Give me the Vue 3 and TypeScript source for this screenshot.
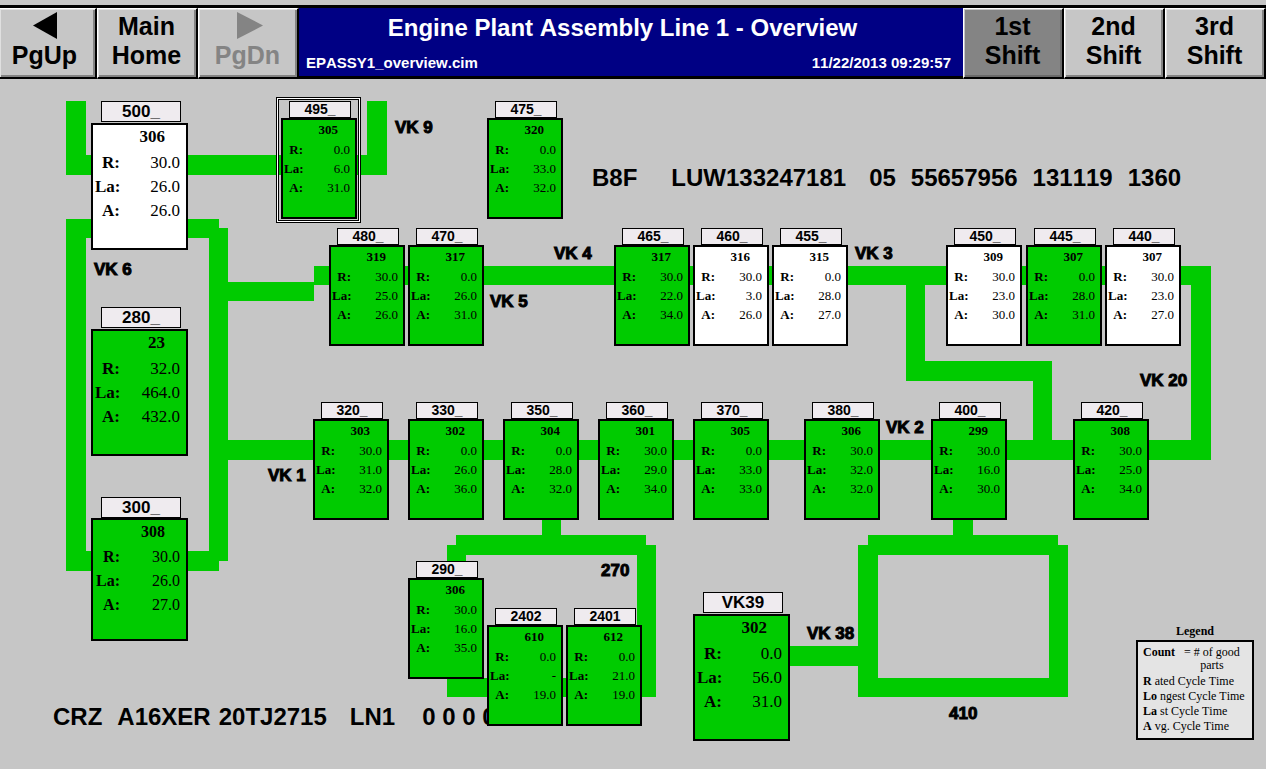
<script setup lang="ts">
import { ref } from 'vue'

type Size = 'small' | 'medium' | 'large'

interface Station {
  name: string
  x: number
  y: number
  count: string
  rated: string
  last: string
  avg: string
  idle?: boolean
  selected?: boolean
  size?: Size
}

interface Label {
  text: string
  x: number
  y: number
}

const shifts = ['1st', '2nd', '3rd']
const activeShift = ref('1st')

// x / y is the top left corner of the station on the floor plan
const stations: Station[] = [
  { name: '500_', x: 91, y: 22, count: '306', rated: '30.0', last: '26.0', avg: '26.0', size: 'large', idle: true },
  { name: '280_', x: 91, y: 228, count: '23', rated: '32.0', last: '464.0', avg: '432.0', size: 'large' },
  { name: '300_', x: 91, y: 418, count: '308', rated: '30.0', last: '26.0', avg: '27.0', size: 'medium' },
  { name: 'VK39', x: 693, y: 513, count: '302', rated: '0.0', last: '56.0', avg: '31.0', size: 'large' },
  { name: '495_', x: 281, y: 22, count: '305', rated: '0.0', last: '6.0', avg: '31.0', selected: true },
  { name: '475_', x: 487, y: 22, count: '320', rated: '0.0', last: '33.0', avg: '32.0' },
  { name: '480_', x: 329, y: 149, count: '319', rated: '30.0', last: '25.0', avg: '26.0' },
  { name: '470_', x: 408, y: 149, count: '317', rated: '0.0', last: '26.0', avg: '31.0' },
  { name: '465_', x: 614, y: 149, count: '317', rated: '30.0', last: '22.0', avg: '34.0' },
  { name: '460_', x: 693, y: 149, count: '316', rated: '30.0', last: '3.0', avg: '26.0', idle: true },
  { name: '455_', x: 772, y: 149, count: '315', rated: '0.0', last: '28.0', avg: '27.0', idle: true },
  { name: '450_', x: 946, y: 149, count: '309', rated: '30.0', last: '23.0', avg: '30.0', idle: true },
  { name: '445_', x: 1026, y: 149, count: '307', rated: '0.0', last: '28.0', avg: '31.0' },
  { name: '440_', x: 1105, y: 149, count: '307', rated: '30.0', last: '23.0', avg: '27.0', idle: true },
  { name: '320_', x: 313, y: 323, count: '303', rated: '30.0', last: '31.0', avg: '32.0' },
  { name: '330_', x: 408, y: 323, count: '302', rated: '0.0', last: '26.0', avg: '36.0' },
  { name: '350_', x: 503, y: 323, count: '304', rated: '0.0', last: '28.0', avg: '32.0' },
  { name: '360_', x: 598, y: 323, count: '301', rated: '30.0', last: '29.0', avg: '34.0' },
  { name: '370_', x: 693, y: 323, count: '305', rated: '0.0', last: '33.0', avg: '33.0' },
  { name: '380_', x: 804, y: 323, count: '306', rated: '30.0', last: '32.0', avg: '32.0' },
  { name: '400_', x: 931, y: 323, count: '299', rated: '30.0', last: '16.0', avg: '30.0' },
  { name: '420_', x: 1073, y: 323, count: '308', rated: '30.0', last: '25.0', avg: '34.0' },
  { name: '290_', x: 408, y: 482, count: '306', rated: '30.0', last: '16.0', avg: '35.0' },
  { name: '2402', x: 487, y: 529, count: '610', rated: '0.0', last: '-', avg: '19.0' },
  { name: '2401', x: 566, y: 529, count: '612', rated: '0.0', last: '21.0', avg: '19.0' },
]

const labels: Label[] = [
  { text: 'VK 9', x: 395, y: 38 },
  { text: 'VK 6', x: 94, y: 180 },
  { text: 'VK 4', x: 554, y: 164 },
  { text: 'VK 5', x: 490, y: 212 },
  { text: 'VK 3', x: 855, y: 164 },
  { text: 'VK 20', x: 1140, y: 291 },
  { text: 'VK 2', x: 886, y: 338 },
  { text: 'VK 1', x: 268, y: 386 },
  { text: '270', x: 601, y: 481 },
  { text: 'VK 38', x: 807, y: 544 },
  { text: '410', x: 949, y: 624 },
]

// conveyor segments: x, y, width, height
const conveyors: [number, number, number, number][] = [
  [66, 22, 20, 74], [66, 76, 320, 20], [367, 22, 20, 74],
  [66, 140, 153, 19], [66, 140, 20, 352], [209, 149, 19, 333], [66, 472, 153, 20],
  [209, 203, 105, 19], [314, 187, 897, 19], [1191, 187, 20, 194], [209, 361, 1002, 20],
  [906, 187, 19, 115], [906, 282, 146, 20], [1033, 282, 19, 99],
  [542, 435, 19, 30], [456, 456, 190, 20], [447, 466, 19, 152], [637, 466, 19, 152], [447, 599, 209, 19],
  [953, 435, 20, 30], [868, 456, 190, 20], [858, 466, 20, 152], [1049, 466, 19, 152], [858, 599, 210, 19],
  [780, 567, 90, 20],
]

const legend = [
  { key: 'R', rest: 'ated Cycle Time' },
  { key: 'Lo', rest: 'ngest Cycle Time' },
  { key: 'La', rest: 'st Cycle Time' },
  { key: 'A', rest: 'vg. Cycle Time' },
]

function at(p: { x: number; y: number }) {
  return { left: `${p.x}px`, top: `${p.y}px` }
}
</script>

<template>
  <div class="screen">
    <header class="bar">
      <button type="button" class="key key-first">
        <svg class="arrow" viewBox="0 0 26 27" aria-hidden="true"><path d="M1 13.500 25 0V27Z" fill="#000" /></svg>
        <span>PgUp</span>
      </button>
      <button type="button" class="key"><span>Main</span><span>Home</span></button>
      <button type="button" class="key" disabled>
        <svg class="arrow next" viewBox="0 0 26 27" aria-hidden="true"><path d="M26 13.500 0 0V27Z" fill="#848484" /></svg>
        <span>PgDn</span>
      </button>
      <div class="title">
        <h1>Engine Plant Assembly Line 1 - Overview</h1>
        <div class="meta">
          <span>EPASSY1_overview.cim</span>
          <time datetime="2013-11-22T09:29:57">11/22/2013 09:29:57</time>
        </div>
      </div>
      <button
        v-for="s in shifts"
        :key="s"
        type="button"
        class="key"
        :class="{ active: s === activeShift }"
        :aria-pressed="s === activeShift"
        @click="activeShift = s"
      >
        <span>{{ s }}</span><span>Shift</span>
      </button>
    </header>

    <main class="floor">
      <svg class="conveyors" aria-hidden="true">
        <rect v-for="(c, i) in conveyors" :key="i" :x="c[0]" :y="c[1]" :width="c[2]" :height="c[3]" />
      </svg>

      <p class="unit unit-top">
        <span class="gap-xl">B8F</span>
        <span class="gap-l">LUW133247181</span>
        <span class="gap-m">05</span>
        <span class="gap-m">55657956</span>
        <span class="gap-m">131119</span>
        <span>1360</span>
      </p>
      <p class="unit unit-bottom">
        <span class="gap-m">CRZ</span>
        <span class="gap-s">A16XER</span>
        <span class="gap-l">20TJ2715</span>
        <span class="gap-l">LN1</span>
        <span class="zeros">0 0 0 0</span>
      </p>

      <section
        v-for="s in stations"
        :key="s.name"
        class="station"
        :class="[s.size ?? 'small', { idle: s.idle, selected: s.selected }]"
        :style="at(s)"
      >
        <h2 class="plate">{{ s.name }}</h2>
        <div class="box">
          <div class="count">{{ s.count }}</div>
          <dl class="times">
            <dt>R:</dt><dd>{{ s.rated }}</dd>
            <dt>La:</dt><dd>{{ s.last }}</dd>
            <dt>A:</dt><dd>{{ s.avg }}</dd>
          </dl>
        </div>
      </section>

      <span v-for="l in labels" :key="l.text" class="label" :style="at(l)">{{ l.text }}</span>

      <aside class="legend">
        <h2>Legend</h2>
        <div class="legend-box">
          <div class="legend-count"><b>Count</b><span>= # of good<br />parts</span></div>
          <div v-for="l in legend" :key="l.key" class="legend-row"><b>{{ l.key }}</b><span>{{ l.rest }}</span></div>
        </div>
      </aside>
    </main>
  </div>
</template>

<style>
body {
  margin: 0;
  background: #fff;
}
</style>

<style scoped>
.screen {
  display: flex;
  flex-direction: column;
  min-height: 100vh;
  margin-right: 4px;
  background: #c6c6c6;
  color: #000;
  font-family: "Liberation Sans", Arial, sans-serif;
  font-kerning: none;
  overflow: hidden;
}

.bar {
  display: flex;
  margin-top: 5px;
  border-top: 3px solid #000;
}

.key {
  box-sizing: border-box;
  flex: none;
  display: flex;
  flex-direction: column;
  align-items: center;
  width: 101px;
  height: 71px;
  margin: 0;
  padding: 3px 1px 0 0;
  border: 1px solid #fff;
  border-right: 2px solid #000;
  border-bottom: 2px solid #000;
  border-radius: 0;
  background: #c6c6c6;
  box-shadow: inset 1px 1px #e0e0e0, inset -2px -2px #848484;
  color: #000;
  font: bold 25px/29px "Liberation Sans", Arial, sans-serif;
}

.key-first {
  width: 97px;
  padding-right: 6px;
  border-left: 0;
}

.key:disabled {
  color: #848484;
}

.key.active {
  background: #848484;
  box-shadow: inset 1px 1px #c6c6c6, inset -2px -2px #6a6a6a;
}

.arrow {
  width: 26px;
  height: 27px;
  margin-bottom: 2px;
}

.next {
  margin-left: 4px;
}

.title {
  flex: 1;
  display: flex;
  flex-direction: column;
  justify-content: space-between;
  padding: 5px 12px 3px 7px;
  border-bottom: 3px solid #000;
  box-sizing: border-box;
  background: #000084;
  color: #fff;
}

.title h1 {
  margin: 0;
  padding-right: 12px;
  font-size: 24px;
  line-height: 29px;
  text-align: center;
  white-space: nowrap;
}

.meta {
  display: flex;
  justify-content: space-between;
  font-weight: bold;
  font-size: 15px;
  line-height: 20px;
}

.floor {
  flex: 1;
  position: relative;
}

.conveyors {
  display: block;
  position: absolute;
  inset: 0;
  width: 100%;
  height: 100%;
  fill: #00cb00;
}

.unit {
  position: absolute;
  display: flex;
  margin: 0;
  font-weight: bold;
  font-size: 24px;
  line-height: 28px;
  white-space: nowrap;
}

.unit-top {
  left: 592px;
  top: 85px;
}

.unit-bottom {
  left: 53px;
  top: 624px;
}

.gap-s {
  margin-right: 8px;
}

.gap-m {
  margin-right: 15px;
}

.gap-l {
  margin-right: 23px;
}

.gap-xl {
  margin-right: 34px;
}

.zeros {
  margin-left: 4px;
}

.station {
  position: absolute;
  width: 76px;
  font-family: "Liberation Serif", "Times New Roman", serif;
  font-size: 13px;
  line-height: 19px;
}

.plate {
  box-sizing: border-box;
  width: 62px;
  height: 17px;
  margin: 0 0 0 8px;
  border: 1px solid #000;
  background: #efebef;
  font: bold 14px/15px "Liberation Sans", Arial, sans-serif;
  text-align: center;
}

.box {
  box-sizing: border-box;
  height: 101px;
  padding: 0 5px 0 1px;
  border: 2px solid #000;
  background: #00cb00;
}

.count {
  padding-right: 12px;
  font-weight: bold;
  text-align: right;
}

.times {
  display: grid;
  grid-template-columns: 19px 1fr;
  margin: 1px 0 0;
}

.times dt,
.times dd {
  margin: 0;
  text-align: right;
  white-space: nowrap;
}

.times dt {
  font-weight: bold;
}

.idle .box {
  background: #fff;
}

.selected::before {
  content: "";
  position: absolute;
  inset: -4px -4px -4px -5px;
  border: 1px solid #000;
  outline: 1px solid #000;
  outline-offset: -3px;
  box-shadow: inset 0 0 0 1px #fff;
}

.large,
.medium {
  width: 97px;
  font-size: 17px;
  line-height: 24px;
}

.large .plate,
.medium .plate {
  width: 80px;
  height: 21px;
  margin: 0 0 1px 10px;
  font-size: 17px;
  line-height: 20px;
}

.large .box,
.medium .box {
  height: 127px;
  padding: 0 6px 0 2px;
}

.large .count,
.medium .count {
  padding-right: 15px;
}

.large .times,
.medium .times {
  grid-template-columns: 25px 1fr;
  margin-top: 2px;
}

.medium {
  font-size: 16px;
}

.medium .plate {
  margin-bottom: 0;
}

.medium .box {
  height: 123px;
}

.medium .count {
  line-height: 23px;
}

.label {
  position: absolute;
  font-weight: bold;
  font-size: 17px;
  line-height: 22px;
  white-space: nowrap;
  -webkit-text-stroke: 1px #000;
}

.legend {
  position: absolute;
  left: 1136px;
  top: 545px;
  width: 118px;
  font-family: "Liberation Serif", "Times New Roman", serif;
  font-size: 12px;
}

.legend h2 {
  margin: 0 0 2px;
  font-size: 12px;
  line-height: 14px;
  text-align: center;
}

.legend-box {
  box-sizing: border-box;
  height: 100px;
  padding: 4px 0 0 5px;
  border: 2px solid #000;
  background: #e4e4e4;
  white-space: nowrap;
}

.legend-count {
  display: flex;
  gap: 9px;
  margin-bottom: 2px;
  line-height: 13px;
}

.legend-count span {
  text-align: center;
}

.legend-row {
  display: flex;
  gap: 3px;
  line-height: 15px;
}
</style>
